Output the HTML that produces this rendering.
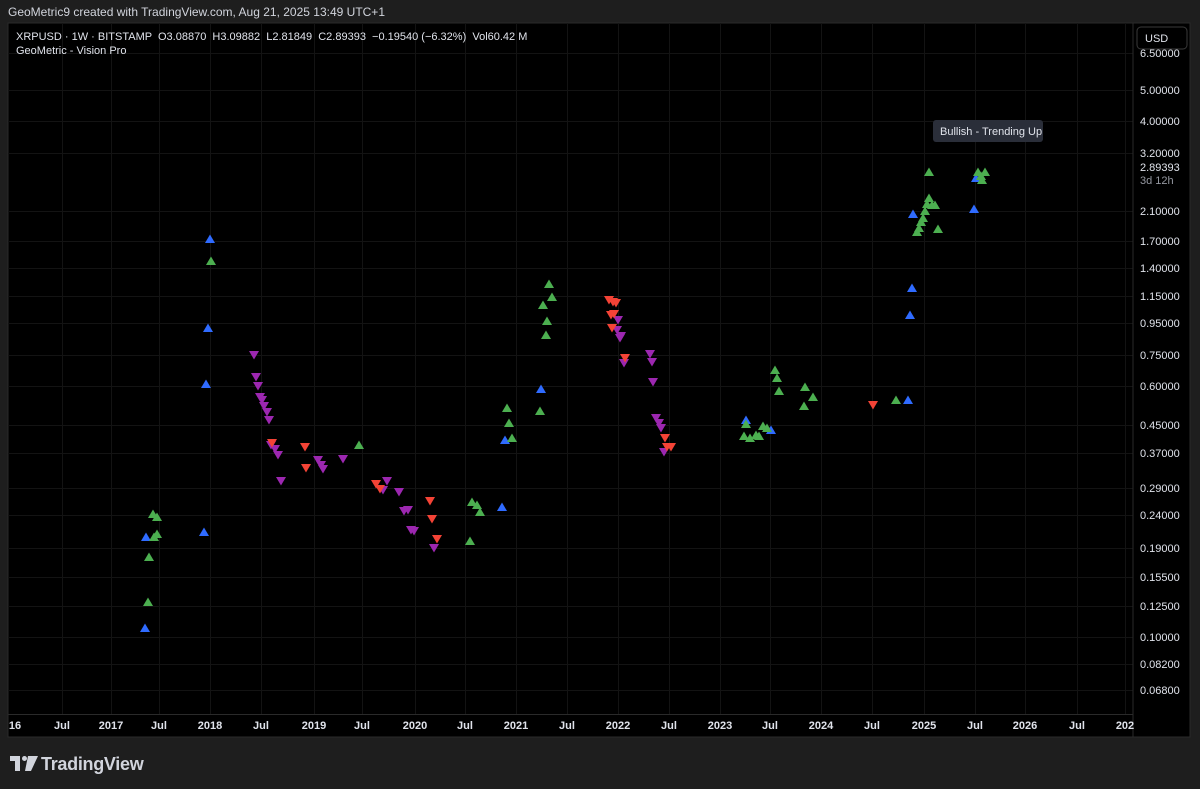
<!DOCTYPE html>
<html><head><meta charset="utf-8"><style>
html,body{margin:0;padding:0;background:#1e1e1e;width:1200px;height:789px;overflow:hidden}
svg{display:block}
text{font-family:"Liberation Sans",sans-serif;white-space:pre}
</style></head><body>
<svg width="1200" height="789" viewBox="0 0 1200 789" xmlns="http://www.w3.org/2000/svg">
<rect width="1200" height="789" fill="#1e1e1e"/>
<text x="8" y="16" font-size="12" fill="#d1d4dc">GeoMetric9 created with TradingView.com, Aug 21, 2025 13:49 UTC+1</text>
<rect x="8" y="23" width="1182" height="714" fill="#000" stroke="#2a2a2a"/>
<g id="grid" stroke="#131313" stroke-width="1">
</g>
<line x1="1133" y1="23" x2="1133" y2="737" stroke="#2a2a2a"/>
<line x1="8" y1="714.5" x2="1133" y2="714.5" stroke="#2a2a2a"/>
<g id="marks"></g>
<text x="16" y="40" font-size="11" fill="#e0e3eb" xml:space="preserve">XRPUSD · 1W · BITSTAMP  O3.08870  H3.09882  L2.81849  C2.89393  −0.19540 (−6.32%)  Vol60.42 M</text>
<text x="16" y="54" font-size="11" fill="#e0e3eb">GeoMetric - Vision Pro</text>
<g id="axis" font-size="11" fill="#e0e3eb"></g>
<rect x="1137" y="27" width="50" height="22" rx="4" fill="#000" stroke="#3a3a3a"/>
<text x="1145" y="42" font-size="11" fill="#e0e3eb">USD</text>
<rect x="933" y="120" width="110" height="22" rx="3" fill="#2a2e39"/>
<text x="940" y="135" font-size="11" fill="#e0e3eb">Bullish - Trending Up</text>
<g fill="#d1d4dc">
<rect x="10" y="756" width="10" height="5"/><rect x="15" y="756" width="5" height="15"/>
<circle cx="24.5" cy="758.5" r="2.5"/><path d="M28 756h10l-7 15h-6z"/>
</g>
<text x="41" y="770" font-size="18" font-weight="bold" fill="#d1d4dc" letter-spacing="-0.3">TradingView</text>
</svg>
<script>
const ns="http://www.w3.org/2000/svg";
const grid=document.getElementById('grid'),marks=document.getElementById('marks'),axis=document.getElementById('axis');
const py=[[53,"6.50000"],[90,"5.00000"],[121,"4.00000"],[153,"3.20000"],[211,"2.10000"],[241,"1.70000"],[268,"1.40000"],[296,"1.15000"],[323,"0.95000"],[355,"0.75000"],[386,"0.60000"],[425,"0.45000"],[453,"0.37000"],[488,"0.29000"],[515,"0.24000"],[548,"0.19000"],[577,"0.15500"],[606,"0.12500"],[637,"0.10000"],[664,"0.08200"],[690,"0.06800"]];
const tx=[[15,"16"],[62,"Jul"],[111,"2017"],[159,"Jul"],[210,"2018"],[261,"Jul"],[314,"2019"],[362,"Jul"],[415,"2020"],[465,"Jul"],[516,"2021"],[567,"Jul"],[618,"2022"],[669,"Jul"],[720,"2023"],[770,"Jul"],[821,"2024"],[872,"Jul"],[924,"2025"],[975,"Jul"],[1025,"2026"],[1077,"Jul"],[1125,"202"]];
function el(t,a,p){const e=document.createElementNS(ns,t);for(const k in a)e.setAttribute(k,a[k]);p.appendChild(e);return e}
py.forEach(([y,l])=>{el('line',{x1:8,x2:1133,y1:y+.5,y2:y+.5},grid);const t=el('text',{x:1140,y:y+4},axis);t.textContent=l;});
tx.forEach(([x,l])=>{if(x>20)el('line',{x1:x+.5,x2:x+.5,y1:23,y2:714},grid);const t=el('text',{x:x,y:729,'text-anchor':'middle','font-weight':'bold'},axis);t.textContent=l;});
let t=el('text',{x:1140,y:171},axis);t.textContent="2.89393";
t=el('text',{x:1140,y:184,fill:'#9598a1'},axis);t.textContent="3d 12h";
const B="#2f6bff",G="#4caf50",P="#9c27b0",R="#f44336";
const up=[[B,[[146,537],[145,628],[204,532],[210,239],[208,328],[206,384],[505,440],[502,507],[541,389],[913,214],[912,288],[910,315],[908,400],[976,178],[974,209],[771,430],[746,420]]],
[G,[[149,557],[148,602],[153,514],[157,517],[154,537],[157,534],[211,261],[470,541],[472,502],[477,505],[480,512],[507,408],[509,423],[512,438],[540,411],[543,305],[546,335],[547,321],[549,284],[552,297],[359,445],[744,436],[746,424],[750,438],[756,435],[759,436],[763,426],[767,428],[775,370],[777,378],[779,391],[805,387],[804,406],[813,397],[896,400],[929,172],[917,232],[919,228],[921,222],[923,218],[925,211],[927,204],[929,198],[932,205],[935,205],[938,229],[978,172],[982,180],[985,172],[981,176]]]];
const dn=[[P,[[254,355],[256,377],[258,386],[260,397],[262,400],[264,406],[267,412],[269,420],[271,445],[275,449],[278,455],[281,481],[318,460],[321,465],[323,469],[343,459],[383,490],[387,481],[399,492],[404,511],[408,510],[411,530],[414,531],[434,548],[617,330],[620,338],[624,363],[650,354],[652,362],[653,382],[656,418],[659,423],[661,428],[664,452],[618,320],[621,336]]],
[R,[[272,443],[305,447],[306,468],[376,484],[380,489],[430,501],[432,519],[437,539],[609,300],[613,302],[616,303],[611,315],[614,314],[612,328],[625,358],[665,438],[667,447],[671,447],[873,405]]]];
up.forEach(([c,a])=>a.forEach(([x,y])=>el('path',{d:`M${x} ${y-4.5}L${x+5} ${y+4}L${x-5} ${y+4}Z`,fill:c},marks)));
dn.forEach(([c,a])=>a.forEach(([x,y])=>el('path',{d:`M${x-5} ${y-4}L${x+5} ${y-4}L${x} ${y+4.5}Z`,fill:c},marks)));
</script>
</body></html>
